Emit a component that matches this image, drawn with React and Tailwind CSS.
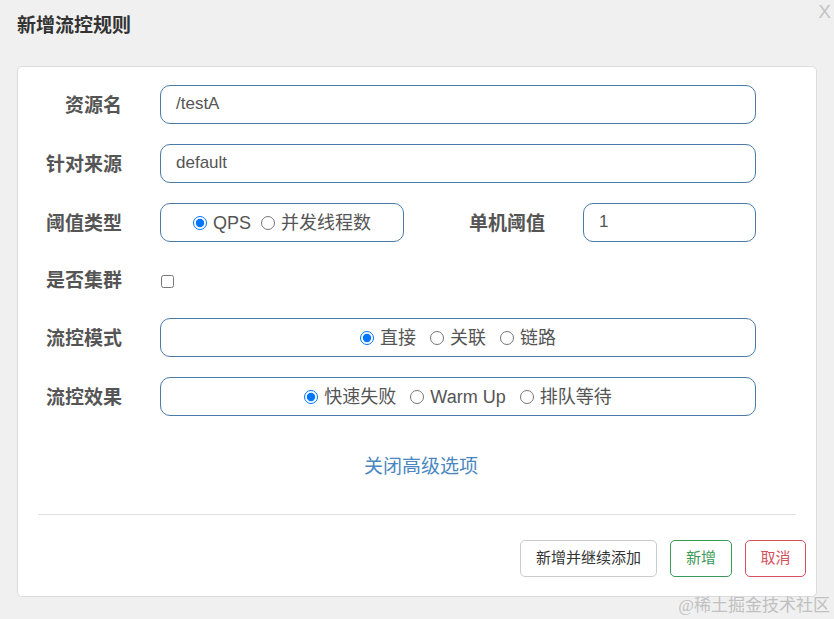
import React from 'react';

const font = { fontFamily: '"Liberation Sans", "Noto Sans CJK SC", sans-serif' };

const Label = ({ children, className = 'w-[104px]' }) => (
  <div className={`${className} shrink-0 pt-[4px] text-right text-[19px] font-bold text-[#555]`}>{children}</div>
);

const Radio = ({ label, checked }) => (
  <label className="flex items-center gap-[6px] pt-[2px] text-[18px] text-[#555]">
    <input type="radio" defaultChecked={checked} className="w-[14px] h-[14px] m-0" name={label} />
    <span>{label}</span>
  </label>
);

const Box = ({ children, className }) => (
  <div className={`${className} h-[39px] rounded-[10px] border border-[#4a7bab] bg-white`}>{children}</div>
);

export default function App() {
  return (
    <div className="relative min-h-[619px] bg-[#f0f0f0]" style={font}>
      <div className="flex justify-between pl-[17px] pr-[3px]">
        <h1 className="pt-[12px] text-[19px] font-bold text-[#333]">新增流控规则</h1>
        <span className="text-[19px] leading-none text-[#c4c4c4] pt-[2px]">X</span>
      </div>

      <div className="ml-[17px] mt-[25px] w-[800px] h-[531px] rounded-[5px] border border-[#dcdcdc] bg-white">
        <div className="pt-[18px] flex flex-col">
          <div className="flex items-center">
            <Label>资源名</Label>
            <Box className="ml-[38px] w-[596px] flex items-center px-[15px]">
              <span className="text-[17px] text-[#555]">/testA</span>
            </Box>
          </div>

          <div className="flex items-center mt-[20px]">
            <Label>针对来源</Label>
            <Box className="ml-[38px] w-[596px] flex items-center px-[15px]">
              <span className="text-[17px] text-[#555]">default</span>
            </Box>
          </div>

          <div className="flex items-center mt-[20px]">
            <Label>阈值类型</Label>
            <Box className="ml-[38px] w-[244px] flex items-center justify-center gap-[10px]">
              <Radio label="QPS" checked />
              <Radio label="并发线程数" />
            </Box>
            <Label className="w-[141px]">单机阈值</Label>
            <Box className="ml-[38px] w-[173px] flex items-center px-[15px]">
              <span className="text-[17px] text-[#555]">1</span>
            </Box>
          </div>

          <div className="flex items-center mt-[20px] h-[36px]">
            <Label>是否集群</Label>
            <input type="checkbox" className="ml-[39px] mt-[4px] w-[13px] h-[13px] m-0" />
          </div>

          <div className="flex items-center mt-[20px]">
            <Label>流控模式</Label>
            <Box className="ml-[38px] w-[596px] flex items-center justify-center gap-[14px]">
              <Radio label="直接" checked />
              <Radio label="关联" />
              <Radio label="链路" />
            </Box>
          </div>

          <div className="flex items-center mt-[20px]">
            <Label>流控效果</Label>
            <Box className="ml-[38px] w-[596px] flex items-center justify-center gap-[14px]">
              <Radio label="快速失败" checked />
              <Radio label="Warm Up" />
              <Radio label="排队等待" />
            </Box>
          </div>

          <div className="mt-[40px] pl-[8px] text-center text-[19px] text-[#4a87c0] leading-[22px]">关闭高级选项</div>

          <div className="mx-[20px] mt-[36px] border-t border-[#e2e2e2]"></div>

          <div className="flex justify-end gap-[13px] pr-[10px] mt-[25px]">
            <button className="h-[37px] px-[15px] rounded-[5px] border border-[#cccccc] text-[15px] text-[#333]">新增并继续添加</button>
            <button className="h-[37px] w-[62px] rounded-[5px] border border-[#3a9a57] text-[15px] text-[#3a9a57]">新增</button>
            <button className="h-[37px] w-[61px] rounded-[5px] border border-[#d2515c] text-[15px] text-[#d2515c]">取消</button>
          </div>
        </div>
      </div>

      <div className="absolute right-[4px] bottom-[5px] text-[17px] text-[#c0c0c0] leading-none" style={{ fontFamily: '"Liberation Serif", "Noto Sans CJK SC", serif' }}>@稀土掘金技术社区</div>
    </div>
  );
}
